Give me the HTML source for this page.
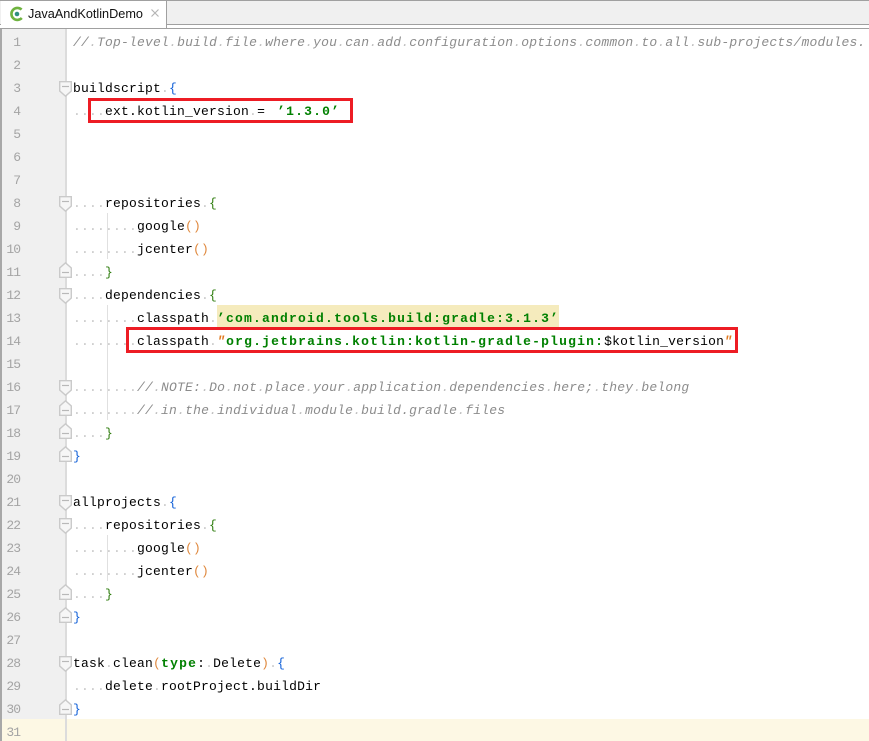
<!DOCTYPE html>
<html><head><meta charset="utf-8"><style>
html,body{margin:0;padding:0;background:#fff}
#p{position:relative;width:869px;height:741px;overflow:hidden;background:#fff}
#p div{position:absolute}
.l{left:73px;height:23px;font:13px/23px "Liberation Mono",monospace;letter-spacing:.2px;white-space:pre;color:#000}
.n{left:0;width:20px;height:23px;text-align:right;font:13px/23px "Liberation Mono",monospace;letter-spacing:-1px;color:#a4a4a4}
i{font-style:normal}
.d{color:#c8c8c8}
.c{color:#8c8c8c;font-style:italic}
.cd{color:#c0c0c0;font-style:italic}
.s{color:#008000;font-weight:bold;letter-spacing:1.2px}
.q{color:#e0771c;font-weight:bold;font-style:italic;letter-spacing:1.2px}
.g{color:#2f7d0f}
.b{color:#1160d8}
.o{color:#e08a40}
.r{border:3px solid #ed1c24;box-sizing:border-box}
</style></head><body><div id="p">
<div style="left:0;top:0;width:869px;height:25px;background:#f0f0f0;border-top:1px solid #a0a0a0;box-sizing:border-box"></div>
<div style="left:0;top:24px;width:869px;height:1px;background:#a0a0a0"></div>
<div style="left:0;top:28px;width:869px;height:1px;background:#a0a0a0"></div>
<div style="left:1px;top:1px;width:165px;height:27px;background:#fff;border-right:1px solid #a0a0a0"></div>
<svg style="position:absolute;left:9px;top:6px" width="16" height="16" viewBox="0 0 16 16"><path d="M12.6 3.6A6 6 0 1 0 12.8 12" fill="none" stroke="#6fb33f" stroke-width="2.6"/><circle cx="8" cy="8" r="2.3" fill="#2f8f7f"/></svg>
<div style="left:28px;top:5px;font:12.7px/18px 'Liberation Sans',sans-serif;color:#111;white-space:pre">JavaAndKotlinDemo</div>
<svg style="position:absolute;left:151px;top:9px" width="8" height="8" viewBox="0 0 8 8"><path d="M.5.5l7 7M7.5.5l-7 7" stroke="#b5b5b5" stroke-width="1.2" fill="none"/></svg>

<div style="left:0;top:29px;width:65px;height:712px;background:#f0f0f0"></div>
<div style="left:65px;top:29px;width:2px;height:712px;background:#dcdcdc"></div>
<div style="left:0;top:719px;width:869px;height:22px;background:#fdf8e4"></div>
<div style="left:0;top:29px;width:2px;height:712px;background:#a8a8a8"></div>
<div style="left:65px;top:719px;width:2px;height:22px;background:#dcdcdc"></div>

<div style="left:107px;top:213px;width:1px;height:46px;background:#e0e0e0"></div>
<div style="left:107px;top:305px;width:1px;height:115px;background:#e0e0e0"></div>
<div style="left:107px;top:535px;width:1px;height:46px;background:#e0e0e0"></div>
<div style="left:217px;top:305px;width:342px;height:23px;background:#f5ebbd"></div>

<div class="n" style="top:31px">1</div>
<div class="n" style="top:54px">2</div>
<div class="n" style="top:77px">3</div>
<div class="n" style="top:100px">4</div>
<div class="n" style="top:123px">5</div>
<div class="n" style="top:146px">6</div>
<div class="n" style="top:169px">7</div>
<div class="n" style="top:192px">8</div>
<div class="n" style="top:215px">9</div>
<div class="n" style="top:238px">10</div>
<div class="n" style="top:261px">11</div>
<div class="n" style="top:284px">12</div>
<div class="n" style="top:307px">13</div>
<div class="n" style="top:330px">14</div>
<div class="n" style="top:353px">15</div>
<div class="n" style="top:376px">16</div>
<div class="n" style="top:399px">17</div>
<div class="n" style="top:422px">18</div>
<div class="n" style="top:445px">19</div>
<div class="n" style="top:468px">20</div>
<div class="n" style="top:491px">21</div>
<div class="n" style="top:514px">22</div>
<div class="n" style="top:537px">23</div>
<div class="n" style="top:560px">24</div>
<div class="n" style="top:583px">25</div>
<div class="n" style="top:606px">26</div>
<div class="n" style="top:629px">27</div>
<div class="n" style="top:652px">28</div>
<div class="n" style="top:675px">29</div>
<div class="n" style="top:698px">30</div>
<div class="n" style="top:721px">31</div>

<svg width="0" height="0" style="position:absolute"><defs>
<g id="fo"><path d="M.7.7h11.6v9.3l-5.8 5.2-5.8-5.2z" fill="#f6f6f6" stroke="#cacaca" stroke-width="1.4"/><path d="M3 5.5h7" stroke="#b8b8b8" stroke-width="1.2"/></g>
<g id="fc"><path d="M.7 15.3h11.6v-9.3l-5.800-5.200-5.800 5.200z" fill="#f6f6f6" stroke="#cacaca" stroke-width="1.4"/><path d="M3 10.500h7" stroke="#b8b8b8" stroke-width="1.2"/></g>
</defs></svg>
<svg style="position:absolute;left:59px;top:81px" width="13" height="16"><use href="#fo"/></svg>
<svg style="position:absolute;left:59px;top:196px" width="13" height="16"><use href="#fo"/></svg>
<svg style="position:absolute;left:59px;top:262px" width="13" height="16"><use href="#fc"/></svg>
<svg style="position:absolute;left:59px;top:288px" width="13" height="16"><use href="#fo"/></svg>
<svg style="position:absolute;left:59px;top:380px" width="13" height="16"><use href="#fo"/></svg>
<svg style="position:absolute;left:59px;top:400px" width="13" height="16"><use href="#fc"/></svg>
<svg style="position:absolute;left:59px;top:423px" width="13" height="16"><use href="#fc"/></svg>
<svg style="position:absolute;left:59px;top:446px" width="13" height="16"><use href="#fc"/></svg>
<svg style="position:absolute;left:59px;top:495px" width="13" height="16"><use href="#fo"/></svg>
<svg style="position:absolute;left:59px;top:518px" width="13" height="16"><use href="#fo"/></svg>
<svg style="position:absolute;left:59px;top:584px" width="13" height="16"><use href="#fc"/></svg>
<svg style="position:absolute;left:59px;top:607px" width="13" height="16"><use href="#fc"/></svg>
<svg style="position:absolute;left:59px;top:656px" width="13" height="16"><use href="#fo"/></svg>
<svg style="position:absolute;left:59px;top:699px" width="13" height="16"><use href="#fc"/></svg>

<div class="l" style="top:31px"><i class="c">//<i class="cd">.</i>Top-level<i class="cd">.</i>build<i class="cd">.</i>file<i class="cd">.</i>where<i class="cd">.</i>you<i class="cd">.</i>can<i class="cd">.</i>add<i class="cd">.</i>configuration<i class="cd">.</i>options<i class="cd">.</i>common<i class="cd">.</i>to<i class="cd">.</i>all<i class="cd">.</i>sub-projects/modules.</i></div>
<div class="l" style="top:77px">buildscript<i class="d">.</i><i class="b">{</i></div>
<div class="l" style="top:100px"><i class="d">....</i>ext.kotlin_version<i class="d">.</i>=<i class="s" style="margin-left:12px">’1.3.0’</i></div>
<div class="l" style="top:192px"><i class="d">....</i>repositories<i class="d">.</i><i class="g">{</i></div>
<div class="l" style="top:215px"><i class="d">........</i>google<i class="o">()</i></div>
<div class="l" style="top:238px"><i class="d">........</i>jcenter<i class="o">()</i></div>
<div class="l" style="top:261px"><i class="d">....</i><i class="g">}</i></div>
<div class="l" style="top:284px"><i class="d">....</i>dependencies<i class="d">.</i><i class="g">{</i></div>
<div class="l" style="top:307px"><i class="d">........</i>classpath<i class="d">.</i><i class="s">’com.android.tools.build:gradle:3.1.3’</i></div>
<div class="l" style="top:330px"><i class="d">........</i>classpath<i class="d">.</i><i class="q">"</i><i class="s">org.jetbrains.kotlin:kotlin-gradle-plugin:</i>$kotlin_version<i class="q">"</i></div>
<div class="l" style="top:376px"><i class="d">........</i><i class="c">//<i class="cd">.</i>NOTE:<i class="cd">.</i>Do<i class="cd">.</i>not<i class="cd">.</i>place<i class="cd">.</i>your<i class="cd">.</i>application<i class="cd">.</i>dependencies<i class="cd">.</i>here;<i class="cd">.</i>they<i class="cd">.</i>belong</i></div>
<div class="l" style="top:399px"><i class="d">........</i><i class="c">//<i class="cd">.</i>in<i class="cd">.</i>the<i class="cd">.</i>individual<i class="cd">.</i>module<i class="cd">.</i>build.gradle<i class="cd">.</i>files</i></div>
<div class="l" style="top:422px"><i class="d">....</i><i class="g">}</i></div>
<div class="l" style="top:445px"><i class="b">}</i></div>
<div class="l" style="top:491px">allprojects<i class="d">.</i><i class="b">{</i></div>
<div class="l" style="top:514px"><i class="d">....</i>repositories<i class="d">.</i><i class="g">{</i></div>
<div class="l" style="top:537px"><i class="d">........</i>google<i class="o">()</i></div>
<div class="l" style="top:560px"><i class="d">........</i>jcenter<i class="o">()</i></div>
<div class="l" style="top:583px"><i class="d">....</i><i class="g">}</i></div>
<div class="l" style="top:606px"><i class="b">}</i></div>
<div class="l" style="top:652px">task<i class="d">.</i>clean<i class="o">(</i><i class="s">type</i>:<i class="d">.</i>Delete<i class="o">)</i><i class="d">.</i><i class="b">{</i></div>
<div class="l" style="top:675px"><i class="d">....</i>delete<i class="d">.</i>rootProject.buildDir</div>
<div class="l" style="top:698px"><i class="b">}</i></div>

<div class="r" style="left:88px;top:98px;width:265px;height:25px"></div>
<div class="r" style="left:126px;top:327px;width:612px;height:26px"></div>
</div></body></html>
